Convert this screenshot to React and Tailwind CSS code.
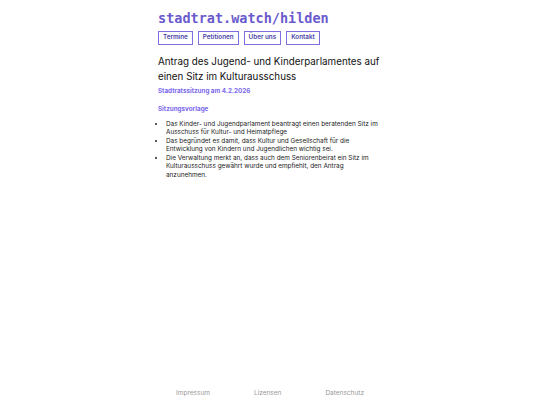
import React from 'react'

const navItems = ['Termine', 'Petitionen', 'Über uns', 'Kontakt']

const points = [
  'Das Kinder- und Jugendparlament beantragt einen beratenden Sitz im Ausschuss für Kultur- und Heimatpflege',
  'Das begründet es damit, dass Kultur und Gesellschaft für die Entwicklung von Kindern und Jugendlichen wichtig sei.',
  'Die Verwaltung merkt an, dass auch dem Seniorenbeirat ein Sitz im Kulturausschuss gewährt wurde und empfiehlt, den Antrag anzunehmen.',
]

export default function App() {
  return (
    <div className="min-h-screen flex flex-col bg-white text-[#111] font-['Inter','Noto_Sans',sans-serif]">
      <div className="w-[224px] mx-auto flex-1">
        <header className="pt-[10px]">
          <h1 className="font-['DejaVu_Sans_Mono','Liberation_Mono',monospace] font-bold text-[13.5px] leading-[17px] text-[#6a5acd]">
            stadtrat.watch/hilden
          </h1>
          <nav className="flex gap-[5px] mt-[4px]">
            {navItems.map((item) => (
              <a
                key={item}
                href="#"
                className="border border-[#7d6fe0] px-[4px] h-[14px] flex items-center text-[6.3px] font-semibold text-[#4a3fa8]"
              >
                {item}
              </a>
            ))}
          </nav>
        </header>

        <main className="mt-[9px]">
          <h2 className="text-[9.8px] leading-[15px] font-normal text-[#111]">
            Antrag des Jugend- und Kinderparlamentes auf einen Sitz im Kulturausschuss
          </h2>
          <p className="mt-[3px] text-[6.3px] font-bold text-[#7b68ee]">Stadtratssitzung am 4.2.2026</p>
          <h3 className="mt-[9px] text-[6.3px] font-bold text-[#7b68ee]">Sitzungsvorlage</h3>
          <ul className="mt-[5px] list-disc pl-[8px] pr-[2px] text-[6.4px] leading-[8.5px] text-[#222]">
            {points.map((p) => (
              <li key={p}>{p}</li>
            ))}
          </ul>
        </main>
      </div>

      <footer className="flex justify-center gap-[44px] pb-[6px] text-[6.5px] text-[#999]">
        <a href="#">Impressum</a>
        <a href="#">Lizensen</a>
        <a href="#">Datenschutz</a>
      </footer>
    </div>
  )
}
